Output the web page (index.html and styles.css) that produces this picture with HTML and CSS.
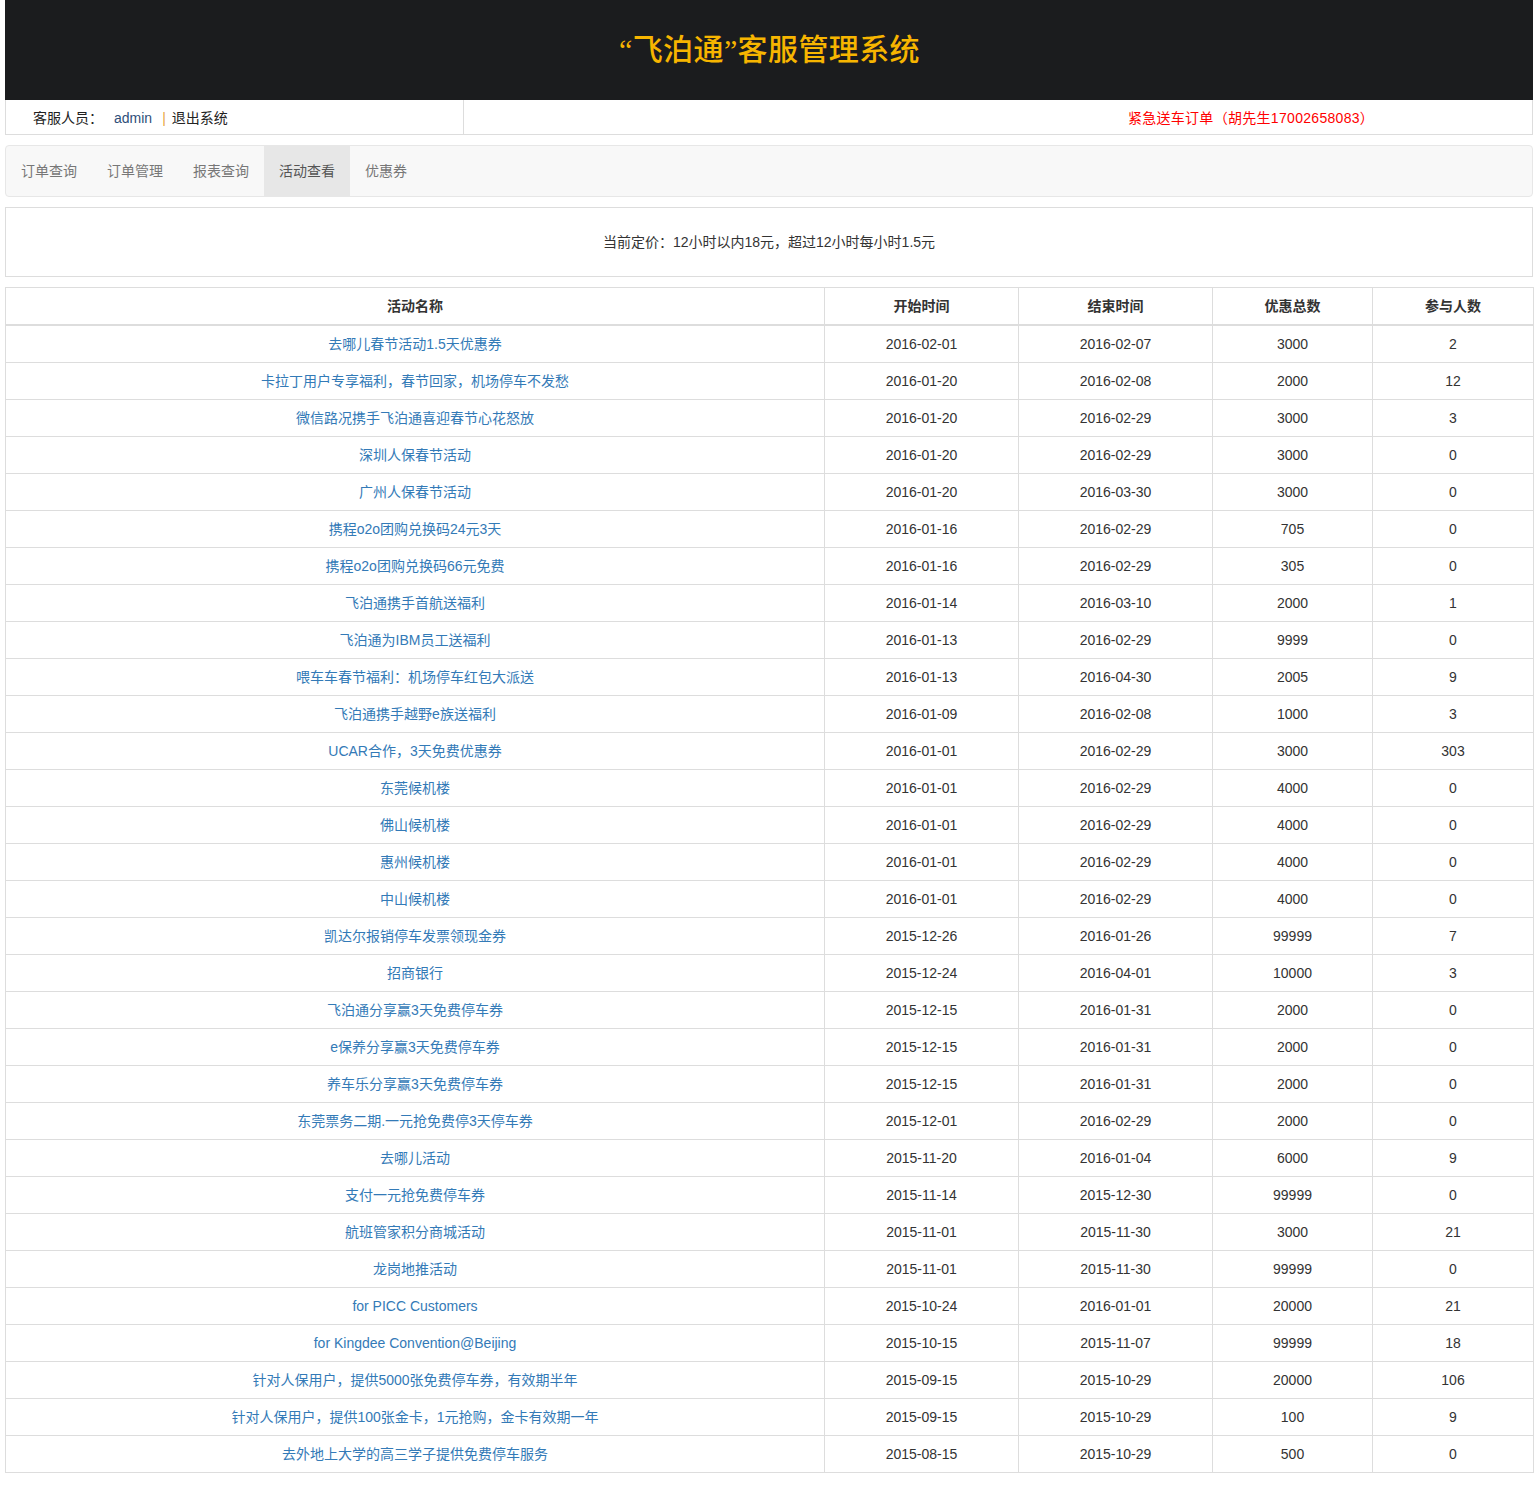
FILE: index.html
```html
<!DOCTYPE html>
<html lang="zh-CN">
<head>
<meta charset="utf-8">
<title>飞泊通客服管理系统</title>
<link rel="stylesheet" href="styles.css">
</head>
<body>
<div class="page">
  <header class="top">
    <h1 class="title">“飞泊通”客服管理系统</h1>
  </header>
  <div class="userbar">
    <div class="user-left"><span>客服人员：</span><span class="admin">admin</span><span class="sep">|</span><span>退出系统</span></div>
    <div class="user-right"><span class="urgent">紧急送车订单（胡先生17002658083）</span></div>
  </div>
  <nav class="navbar">
    <a class="tab">订单查询</a>
    <a class="tab">订单管理</a>
    <a class="tab">报表查询</a>
    <a class="tab active">活动查看</a>
    <a class="tab">优惠券</a>
  </nav>
  <div class="price">当前定价：12小时以内18元，超过12小时每小时1.5元</div>
  <table class="acts">
    <colgroup>
      <col class="c1"><col class="c2"><col class="c3"><col class="c4"><col class="c5">
    </colgroup>
    <thead>
      <tr><th>活动名称</th><th>开始时间</th><th>结束时间</th><th>优惠总数</th><th>参与人数</th></tr>
    </thead>
    <tbody>
      <tr><td><a>去哪儿春节活动1.5天优惠券</a></td><td>2016-02-01</td><td>2016-02-07</td><td>3000</td><td>2</td></tr>
      <tr><td><a>卡拉丁用户专享福利，春节回家，机场停车不发愁</a></td><td>2016-01-20</td><td>2016-02-08</td><td>2000</td><td>12</td></tr>
      <tr><td><a>微信路况携手飞泊通喜迎春节心花怒放</a></td><td>2016-01-20</td><td>2016-02-29</td><td>3000</td><td>3</td></tr>
      <tr><td><a>深圳人保春节活动</a></td><td>2016-01-20</td><td>2016-02-29</td><td>3000</td><td>0</td></tr>
      <tr><td><a>广州人保春节活动</a></td><td>2016-01-20</td><td>2016-03-30</td><td>3000</td><td>0</td></tr>
      <tr><td><a>携程o2o团购兑换码24元3天</a></td><td>2016-01-16</td><td>2016-02-29</td><td>705</td><td>0</td></tr>
      <tr><td><a>携程o2o团购兑换码66元免费</a></td><td>2016-01-16</td><td>2016-02-29</td><td>305</td><td>0</td></tr>
      <tr><td><a>飞泊通携手首航送福利</a></td><td>2016-01-14</td><td>2016-03-10</td><td>2000</td><td>1</td></tr>
      <tr><td><a>飞泊通为IBM员工送福利</a></td><td>2016-01-13</td><td>2016-02-29</td><td>9999</td><td>0</td></tr>
      <tr><td><a>喂车车春节福利：机场停车红包大派送</a></td><td>2016-01-13</td><td>2016-04-30</td><td>2005</td><td>9</td></tr>
      <tr><td><a>飞泊通携手越野e族送福利</a></td><td>2016-01-09</td><td>2016-02-08</td><td>1000</td><td>3</td></tr>
      <tr><td><a>UCAR合作，3天免费优惠券</a></td><td>2016-01-01</td><td>2016-02-29</td><td>3000</td><td>303</td></tr>
      <tr><td><a>东莞候机楼</a></td><td>2016-01-01</td><td>2016-02-29</td><td>4000</td><td>0</td></tr>
      <tr><td><a>佛山候机楼</a></td><td>2016-01-01</td><td>2016-02-29</td><td>4000</td><td>0</td></tr>
      <tr><td><a>惠州候机楼</a></td><td>2016-01-01</td><td>2016-02-29</td><td>4000</td><td>0</td></tr>
      <tr><td><a>中山候机楼</a></td><td>2016-01-01</td><td>2016-02-29</td><td>4000</td><td>0</td></tr>
      <tr><td><a>凯达尔报销停车发票领现金券</a></td><td>2015-12-26</td><td>2016-01-26</td><td>99999</td><td>7</td></tr>
      <tr><td><a>招商银行</a></td><td>2015-12-24</td><td>2016-04-01</td><td>10000</td><td>3</td></tr>
      <tr><td><a>飞泊通分享赢3天免费停车券</a></td><td>2015-12-15</td><td>2016-01-31</td><td>2000</td><td>0</td></tr>
      <tr><td><a>e保养分享赢3天免费停车券</a></td><td>2015-12-15</td><td>2016-01-31</td><td>2000</td><td>0</td></tr>
      <tr><td><a>养车乐分享赢3天免费停车券</a></td><td>2015-12-15</td><td>2016-01-31</td><td>2000</td><td>0</td></tr>
      <tr><td><a>东莞票务二期.一元抢免费停3天停车券</a></td><td>2015-12-01</td><td>2016-02-29</td><td>2000</td><td>0</td></tr>
      <tr><td><a>去哪儿活动</a></td><td>2015-11-20</td><td>2016-01-04</td><td>6000</td><td>9</td></tr>
      <tr><td><a>支付一元抢免费停车券</a></td><td>2015-11-14</td><td>2015-12-30</td><td>99999</td><td>0</td></tr>
      <tr><td><a>航班管家积分商城活动</a></td><td>2015-11-01</td><td>2015-11-30</td><td>3000</td><td>21</td></tr>
      <tr><td><a>龙岗地推活动</a></td><td>2015-11-01</td><td>2015-11-30</td><td>99999</td><td>0</td></tr>
      <tr><td><a>for PICC Customers</a></td><td>2015-10-24</td><td>2016-01-01</td><td>20000</td><td>21</td></tr>
      <tr><td><a>for Kingdee Convention@Beijing</a></td><td>2015-10-15</td><td>2015-11-07</td><td>99999</td><td>18</td></tr>
      <tr><td><a>针对人保用户，提供5000张免费停车券，有效期半年</a></td><td>2015-09-15</td><td>2015-10-29</td><td>20000</td><td>106</td></tr>
      <tr><td><a>针对人保用户，提供100张金卡，1元抢购，金卡有效期一年</a></td><td>2015-09-15</td><td>2015-10-29</td><td>100</td><td>9</td></tr>
      <tr><td><a>去外地上大学的高三学子提供免费停车服务</a></td><td>2015-08-15</td><td>2015-10-29</td><td>500</td><td>0</td></tr>
    </tbody>
  </table>
</div>
</body>
</html>
```
FILE: styles.css
```css
* { box-sizing: border-box; }
html, body { margin: 0; padding: 0; background: #fff; }
body {
  font-family: "Liberation Sans", "Noto Sans CJK SC", sans-serif;
  font-size: 14px;
  line-height: 20px;
  color: #333;
}
.page { padding: 0 5px 20px; }

.top {
  background: #1b1c1e;
  height: 100px;
  display: flex;
  align-items: center;
  justify-content: center;
}
.title {
  margin: 0;
  font-family: "Liberation Serif", "Noto Sans CJK SC", serif;
  font-weight: 500;
  font-size: 30px;
  line-height: 36px;
  color: #f7b500;
  letter-spacing: 0.4px;
  padding-left: 1px;
}

.userbar {
  display: flex;
  border: 1px solid #ddd;
  border-top: none;
  height: 35px;
}
.user-left {
  width: 458px;
  border-right: 1px solid #ddd;
  padding-left: 27px;
  padding-top: 1px;
  display: flex;
  align-items: center;
  color: #222;
}
.admin { color: #2f4f7a; margin-left: 11px; }
.sep { color: #e8a33d; margin: 0 6px 0 10px; }
.user-right {
  flex: 1;
  display: flex;
  align-items: center;
  justify-content: center;
  padding-left: 506px;
  padding-top: 1px;
}
.urgent { color: #ff0000; letter-spacing: 0.3px; }

.navbar {
  margin-top: 10px;
  display: flex;
  height: 52px;
  background: #f8f8f8;
  border: 1px solid #e7e7e7;
  border-radius: 4px;
  overflow: hidden;
}
.tab {
  padding: 15px;
  line-height: 20px;
  color: #777;
}
.tab.active {
  background: #e7e7e7;
  color: #555;
}

.price {
  margin-top: 10px;
  border: 1px solid #ddd;
  height: 70px;
  display: flex;
  align-items: center;
  justify-content: center;
  color: #333;
}

.acts {
  margin-top: 10px;
  width: 100%;
  border-collapse: collapse;
  table-layout: fixed;
  border: 1px solid #ddd;
}
.c1 { width: 819px; }
.c2 { width: 194px; }
.c3 { width: 194px; }
.c4 { width: 160px; }
.c5 { width: 161px; }
.acts th, .acts td {
  border: 1px solid #ddd;
  padding: 8px;
  text-align: center;
  line-height: 20px;
  white-space: nowrap;
}
.acts th {
  font-weight: bold;
  border-bottom: 2px solid #ddd;
  color: #333;
}
.acts td { color: #333; }
.acts td a { color: #337ab7; text-decoration: none; }
```
